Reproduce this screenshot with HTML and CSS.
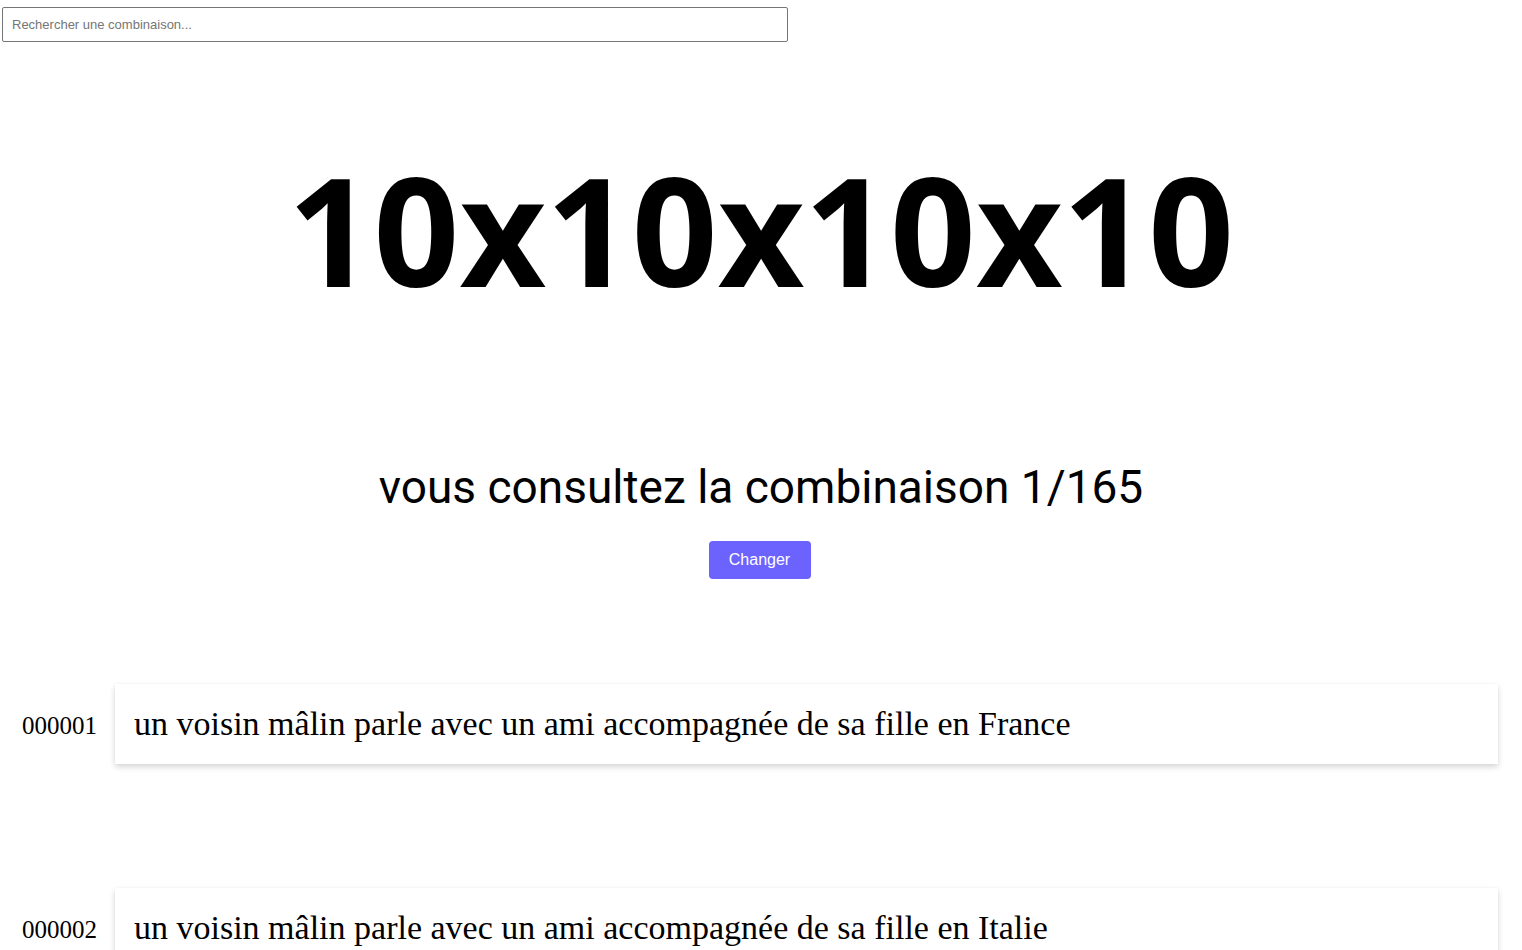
FILE: index.html
```html
<!DOCTYPE html>
<html lang="fr">
<head>
  <meta charset="UTF-8">
  <meta name="viewport" content="width=device-width, initial-scale=1.0">
  <title>10x10x10x10</title>
  <link rel="stylesheet" href="styles.css">
</head>
<body>
  <div class="search-bar">
    <input type="text" id="search" placeholder="Rechercher une combinaison...">
  </div>

  <h1 class="title">10x10x10x10</h1>

  <div class="status">
    <p class="status-text">vous consultez la combinaison 1/165</p>
    <button class="change-button">Changer</button>
  </div>

  <div class="list">
    <div class="row">
      <span class="row-number">000001</span>
      <div class="row-card">un voisin mâlin parle avec un ami accompagnée de sa fille en France</div>
    </div>
    <div class="row">
      <span class="row-number">000002</span>
      <div class="row-card">un voisin mâlin parle avec un ami accompagnée de sa fille en Italie</div>
    </div>
  </div>
</body>
</html>
```

FILE: styles.css
```css
body {
  margin: 0;
  font-family: "Liberation Serif", "Times New Roman", serif;
  background-color: #fff;
  color: #000;
}

.search-bar {
  padding: 7px 2px 0;
}

#search {
  box-sizing: border-box;
  width: 786px;
  height: 35px;
  padding: 0 9px;
  border: 1px solid #767676;
  border-radius: 2px;
  font-family: "Liberation Sans", Arial, sans-serif;
  font-size: 13px;
  outline: none;
}

#search::placeholder {
  color: #757575;
}

.title {
  margin: 85px 0 0;
  text-align: center;
  font-family: "Open Sans", sans-serif;
  font-size: 150px;
  font-weight: 700;
  line-height: 1.362;
}

.status {
  display: flex;
  flex-direction: column;
  align-items: center;
  margin-top: 128px;
}

.status-text {
  margin: 0;
  font-family: Roboto, sans-serif;
  font-size: 46px;
  line-height: 56px;
}

.change-button {
  margin-top: 26px;
  margin-right: 3px;
  width: 102px;
  height: 38px;
  background-color: #6c63ff;
  color: #fff;
  border: none;
  border-radius: 4px;
  font-family: "Liberation Sans", Arial, sans-serif;
  font-size: 16px;
  cursor: pointer;
}

.list {
  display: flex;
  flex-direction: column;
  gap: 124px;
  margin-top: 105px;
  padding: 0 24px 0 22px;
}

.row {
  display: flex;
  align-items: center;
}

.row-number {
  width: 93px;
  flex-shrink: 0;
  padding-top: 4px;
  font-size: 25px;
}

.row-card {
  flex: 1;
  height: 80px;
  box-sizing: border-box;
  display: flex;
  align-items: center;
  padding: 0 19px;
  font-size: 34px;
  background-color: #fff;
  box-shadow: 0 3px 6px rgba(0, 0, 0, 0.16), 0 0 2px rgba(0, 0, 0, 0.04);
}
```
